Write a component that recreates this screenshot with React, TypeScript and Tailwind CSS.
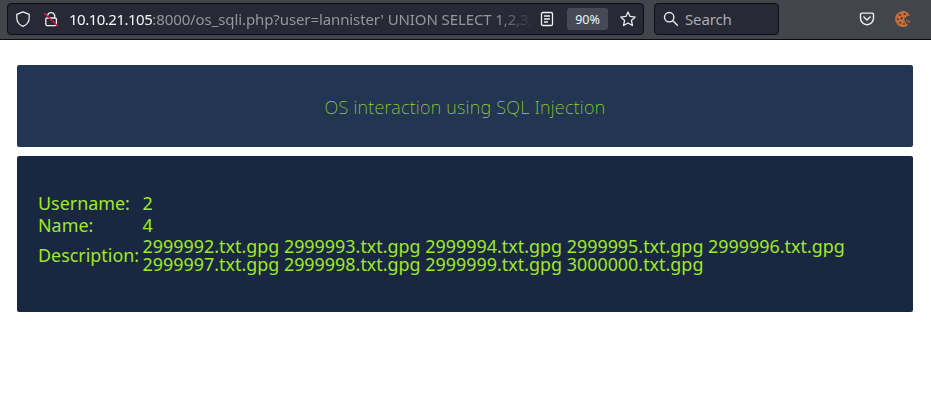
import React from "react";

const rows = [
  { label: "Username:", value: "2" },
  { label: "Name:", value: "4" },
];

const files = [
  "2999992.txt.gpg 2999993.txt.gpg 2999994.txt.gpg 2999995.txt.gpg 2999996.txt.gpg",
  "2999997.txt.gpg 2999998.txt.gpg 2999999.txt.gpg 3000000.txt.gpg",
];

function ShieldIcon() {
  return (
    <svg className="h-4 w-4 shrink-0" viewBox="0 0 16 16" fill="none" stroke="#f0f0f3" strokeWidth="1.25" strokeLinejoin="round">
      <path d="M8 .9 14.2 3.4V6.7C14.2 10.6 11.8 13.8 8 15.3 4.2 13.8 1.8 10.6 1.8 6.7V3.4Z" />
    </svg>
  );
}

function InsecureLockIcon() {
  return (
    <svg className="h-4 w-4 shrink-0" viewBox="0 0 16 16" fill="none" stroke="#f0f0f3" strokeWidth="1.3">
      <rect x="2.8" y="7" width="10.6" height="7.6" rx="1.3" />
      <path d="M4.5 4.5A3.7 3.7 0 0 1 11.7 4.5V7" />
      <path d="M1.2 2.2 14.8 15" stroke="#e0143f" strokeWidth="1.5" />
    </svg>
  );
}

function ReaderIcon() {
  return (
    <svg className="h-4 w-4 shrink-0" viewBox="0 0 16 16" fill="none" stroke="#f0f0f3" strokeWidth="1.3">
      <rect x="2.5" y="1.5" width="11" height="13" rx="1.3" />
      <path d="M5 5H11M5 8H11M5 11H9" />
    </svg>
  );
}

function StarIcon() {
  return (
    <svg className="h-4 w-4 shrink-0" viewBox="0 0 16 16" fill="none" stroke="#f0f0f3" strokeWidth="1.25" strokeLinejoin="round">
      <path d="m8 .9 2.05 4.5 5.15.6-3.8 3.45 1.1 5.1L8 12 3.5 14.55l1.1-5.1L.8 6l5.15-.6Z" />
    </svg>
  );
}

function SearchIcon() {
  return (
    <svg className="h-4 w-4 shrink-0" viewBox="0 0 16 16" fill="none" stroke="#f0f0f3" strokeWidth="1.4" strokeLinecap="round">
      <circle cx="6.2" cy="6.2" r="4.7" />
      <path d="m9.8 9.8 4.6 4.5" />
    </svg>
  );
}

function PocketIcon() {
  return (
    <svg className="h-4 w-4 shrink-0" viewBox="0 0 16 16" fill="none" stroke="#f0f0f3" strokeWidth="1.4" strokeLinecap="round" strokeLinejoin="round">
      <path d="M2.7 2.1H13.3Q14.5 2.1 14.5 3.3V7.2A6.5 6.5 0 0 1 1.5 7.2V3.3Q1.5 2.1 2.7 2.1Z" />
      <path d="m4.9 6.1 3.1 3 3.1-3" />
    </svg>
  );
}

function CookieIcon() {
  return (
    <svg className="h-4 w-4 shrink-0" viewBox="0 0 16 16">
      <path d="M12.5 1.4A8 8 0 1 0 13.4 14L11.4 13 11 11.4 9.2 10.6 9.8 8.8 9 7 11.2 6.2 12 4.8 15.2 4.8Z" fill="#c1713f" />
      <path d="M12.8 9.6h1.9v1.8h-1.9ZM11 8.8h1.2v1.4H11Z" fill="#c1713f" />
      <g fill="#5f3018">
        <circle cx="5" cy="4" r="1.1" />
        <circle cx="9.6" cy="3" r="1.1" />
        <circle cx="2.8" cy="8.2" r="1" />
        <circle cx="6.6" cy="7.4" r="1.1" />
        <circle cx="5.2" cy="11.8" r="1" />
        <circle cx="9" cy="13" r=".9" />
      </g>
    </svg>
  );
}

export default function App() {
  return (
    <div className="h-[406px] w-full overflow-hidden bg-white font-['Noto_Sans',sans-serif]">
      <header className="flex h-10 items-start border-b border-[#0c0c11] bg-[#42454c] pl-[7px] pt-[3px]">
        <div className="flex h-8 w-[637px] items-center rounded-[4px] border border-[#0d0e13] bg-[#272934] pl-[7px]">
          <ShieldIcon />
          <span className="ml-3 flex"><InsecureLockIcon /></span>
          <div className="ml-[10px] w-[462px] overflow-hidden whitespace-pre text-[15px] leading-5 tracking-[-0.1px] text-[#96979d] [mask-image:linear-gradient(to_right,black_425px,transparent_465px)]">
            <span className="tracking-[-0.5px] text-[#f5f5f7]">10.10.21.105</span>:8000/os_sqli.php?user=lannister' UNION SELECT 1,2,3,
          </div>
          <span className="ml-2 flex"><ReaderIcon /></span>
          <span className="ml-[12px] flex h-[22px] w-[41px] items-center justify-center rounded-[3px] bg-[#474a54] pt-[2px] text-[12.5px] text-[#f2f2f4]">90%</span>
          <span className="ml-3 flex"><StarIcon /></span>
        </div>
        <div className="ml-[10px] flex h-8 w-[125px] items-center rounded-[4px] border border-[#0d0e13] bg-[#272934] pl-2">
          <SearchIcon />
          <span className="ml-[6px] text-[15px] leading-5 tracking-[-0.15px] text-[#abacb1]">Search</span>
        </div>
        <div className="ml-20 flex h-8 items-center gap-5">
          <PocketIcon />
          <CookieIcon />
        </div>
      </header>
      <main className="ml-[17px] mt-[25px] w-[896px] text-[17.91px] leading-[18px] text-[#9fe929]">
        <h1 className="flex h-[82px] items-center justify-center rounded-[2px] bg-[#223553] pt-px text-[18px] font-[200] tracking-[0.24px] text-[#94d22c]">
          OS interaction using SQL Injection
        </h1>
        <section className="mt-[9px] flex h-[156px] flex-col rounded-[2px] bg-[#1a2740] pl-[21px] pt-9">
          {rows.map((row) => (
            <div key={row.label} className="flex h-[22px] items-center">
              <span className="w-[104.5px]">{row.label}</span>
              <span>{row.value}</span>
            </div>
          ))}
          <div className="mt-px flex items-center">
            <span className="w-[104.5px]">Description:</span>
            <div>
              {files.map((line) => (
                <div key={line}>{line}</div>
              ))}
            </div>
          </div>
        </section>
      </main>
    </div>
  );
}
